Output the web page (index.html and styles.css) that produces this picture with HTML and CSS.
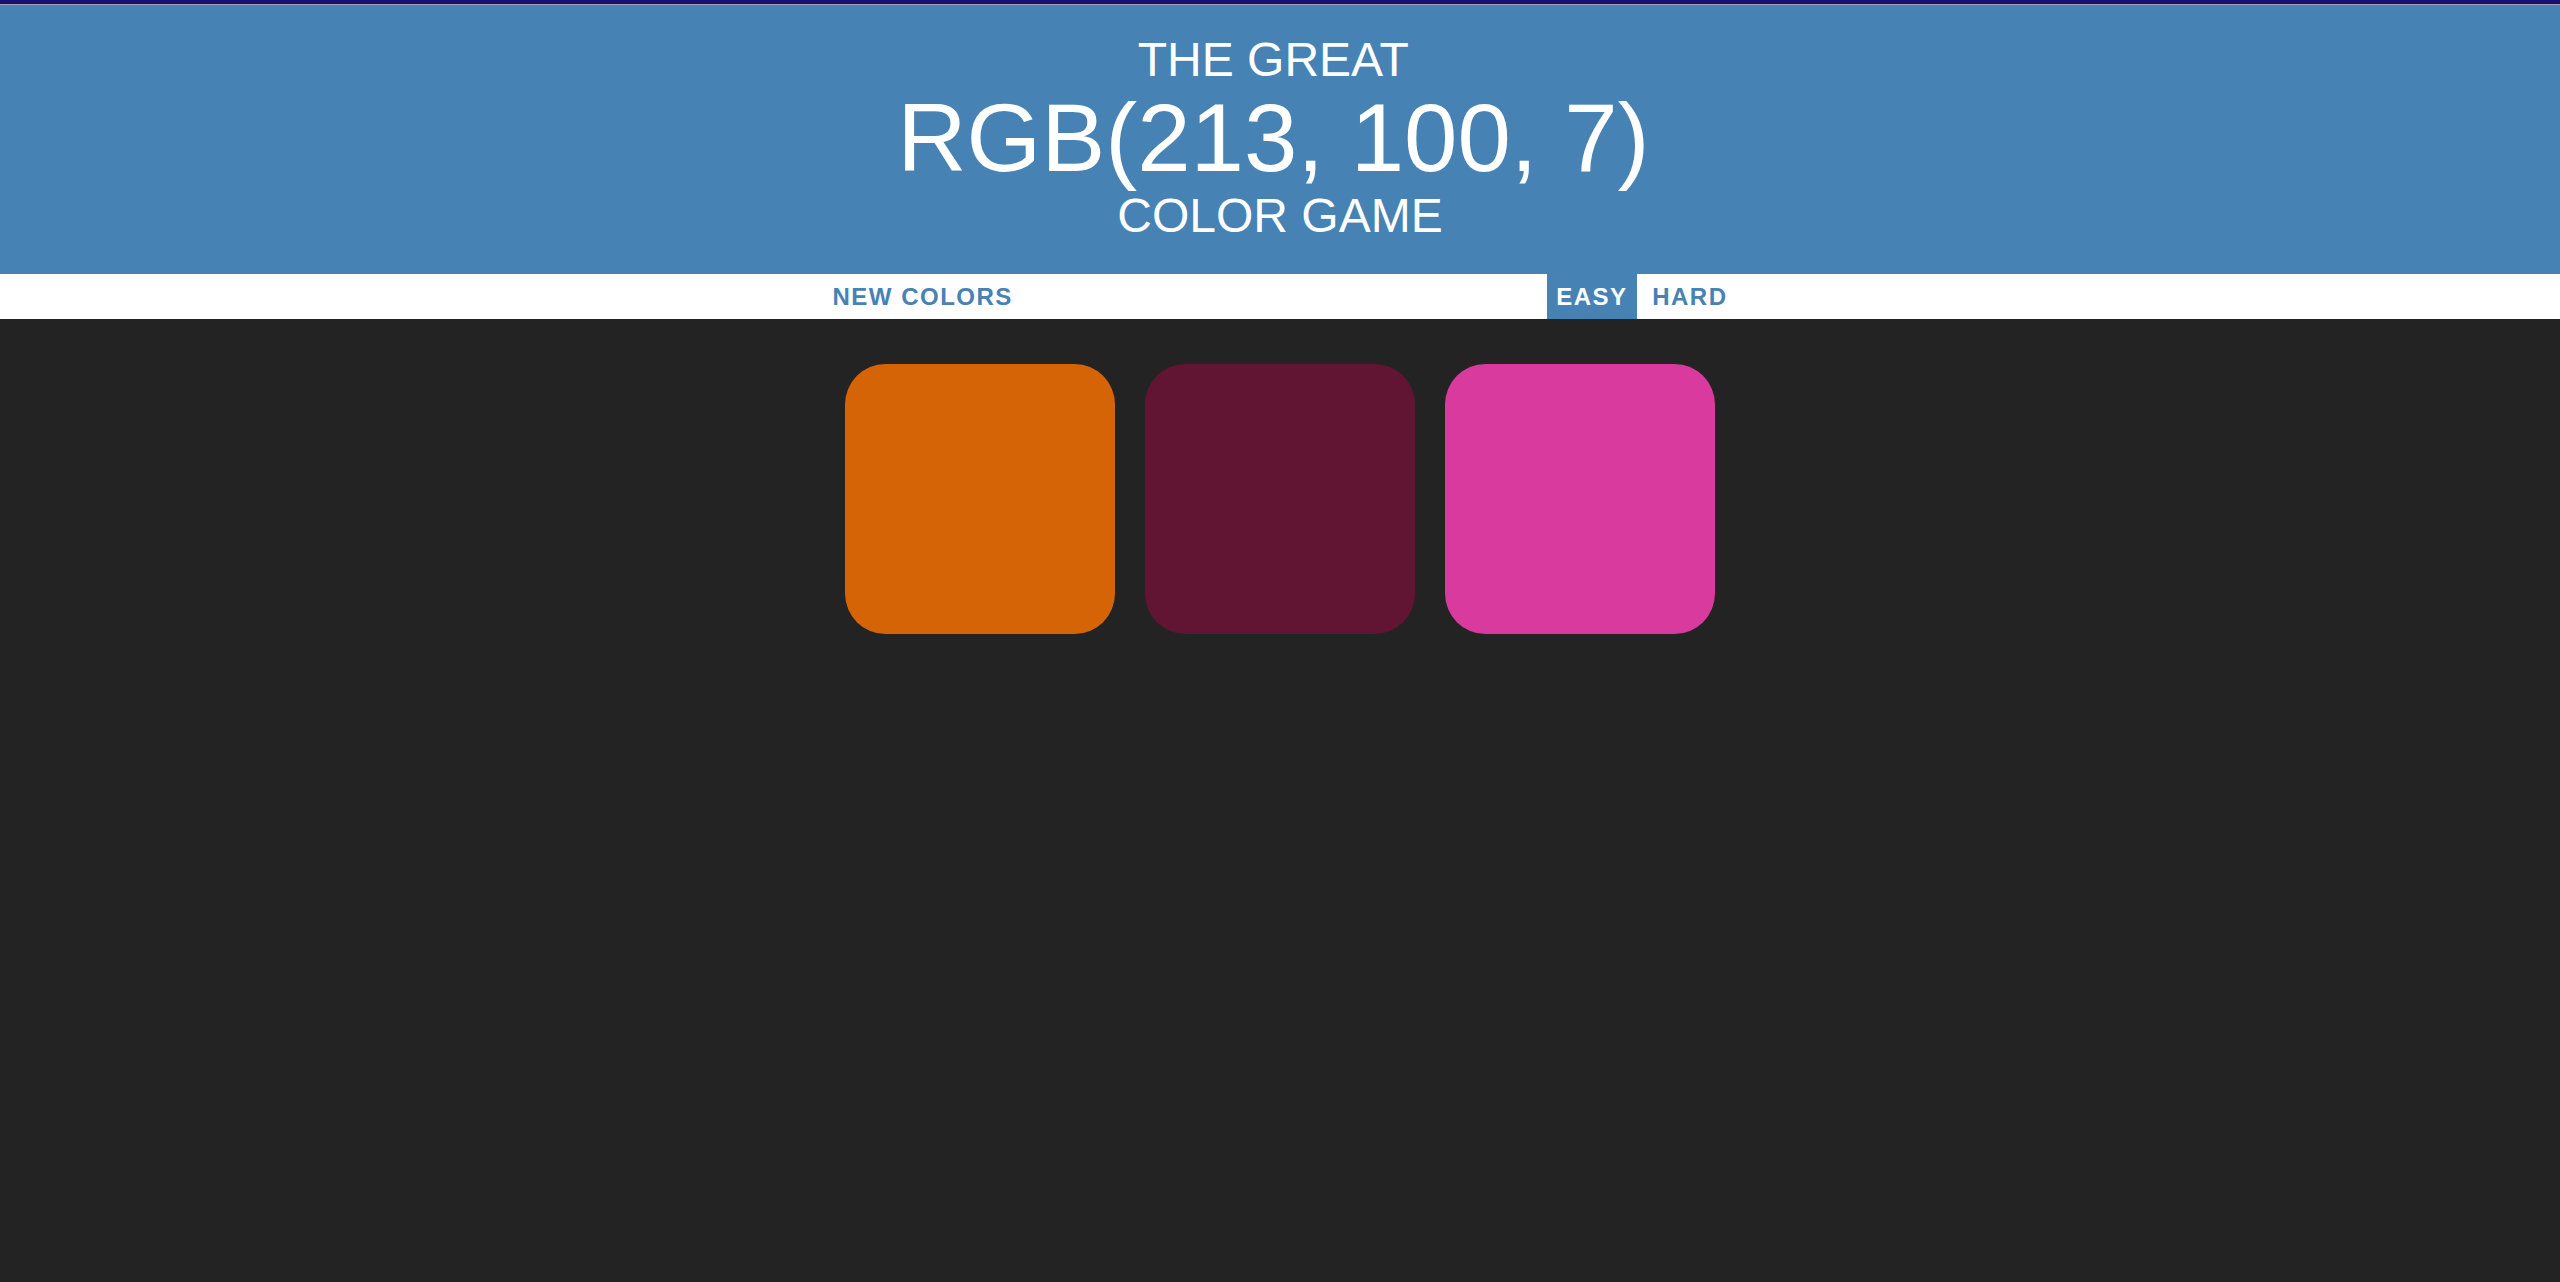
FILE: index.html
```html
<!DOCTYPE html>
<html>
<head>
<meta charset="utf-8">
<title>Color Game</title>
<link rel="stylesheet" href="styles.css">
</head>
<body>
<div class="topbar"></div>
<h1 class="title">The Great&nbsp;<br><span class="color-display">RGB(213, 100, 7)</span>&nbsp;<br>Color Game</h1>
<div class="stripe">
  <button class="btn">New Colors</button>
  <span class="message"></span>
  <button class="btn selected">Easy</button>
  <button class="btn">Hard</button>
</div>
<div class="container">
  <div class="square sq-1"></div>
  <div class="square sq-2"></div>
  <div class="square sq-3"></div>
</div>
</body>
</html>
```

FILE: styles.css
```css
html, body {
  margin: 0;
  padding: 0;
}
body {
  background: #232323;
  font-family: "Liberation Sans", Arial, sans-serif;
}
.topbar {
  height: 4px;
  background: #1a0d78;
  border-bottom: 1px solid #9a9cb0;
}
.title {
  margin: 0;
  padding: 28.5px 0 31px;
  background: #4682b4;
  color: #fff;
  text-align: center;
  text-transform: uppercase;
  font-weight: normal;
  font-size: 48px;
  line-height: 1.1;
}
.color-display {
  font-size: 96px;
  line-height: 104px;
}
.stripe {
  background: #fff;
  height: 45px;
  text-align: center;
  font-size: 24px;
}
.btn {
  border: none;
  background: none;
  text-transform: uppercase;
  height: 100%;
  font-family: "Liberation Sans", Arial, sans-serif;
  font-weight: 700;
  font-size: inherit;
  color: #4682b4;
  letter-spacing: 1.5px;
  padding: 1.5px 9px;
  margin: 0;
  outline: none;
  vertical-align: top;
}
.btn.selected {
  color: #fff;
  background: #4682b4;
}
.message {
  display: inline-block;
  width: 20%;
}
.container {
  width: 900px;
  margin: 30px auto;
  display: flex;
}
.square {
  width: 30%;
  aspect-ratio: 1 / 1;
  margin: 1.66%;
  border-radius: 15%;
}
.sq-1 { background: rgb(213, 100, 7); }
.sq-2 { background: rgb(97, 21, 50); }
.sq-3 { background: rgb(217, 58, 158); }
```
